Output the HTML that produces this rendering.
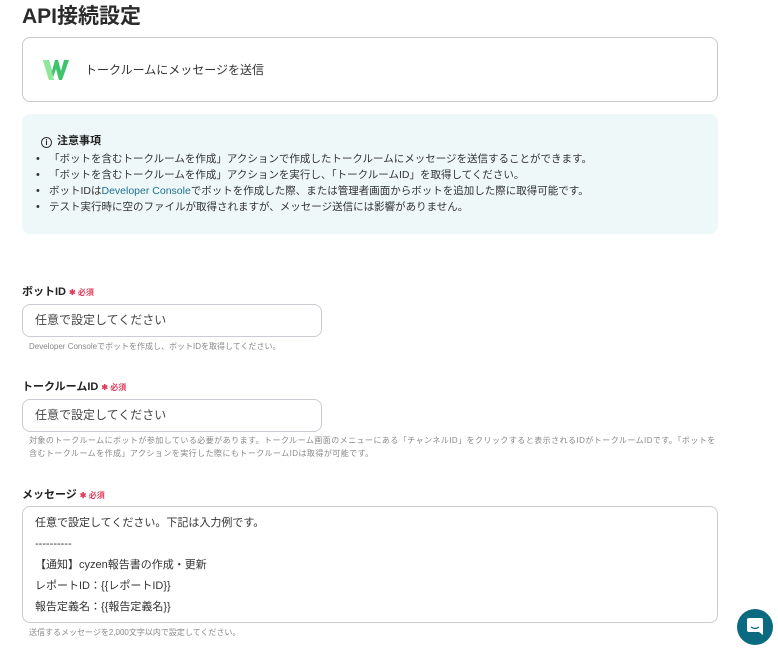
<!DOCTYPE html>
<html><head><meta charset="utf-8"><style>
*{box-sizing:border-box;margin:0;padding:0}
body{width:778px;height:654px;overflow:hidden;background:#fff;font-family:"Liberation Sans","Noto Sans CJK JP",sans-serif;color:#222;position:relative}
.abs{position:absolute}
h1{position:absolute;left:22px;top:0px;font-size:21px;font-weight:bold;color:#2b2b2b}
.card{left:22px;top:37px;width:696px;height:65px;border:1px solid #c8c8c8;border-radius:8px}
.note{left:22px;top:114px;width:696px;height:120px;background:#eff8f8;border-radius:8px}
.note ul{position:absolute;left:14px;top:37px;list-style:none;font-size:10.5px;line-height:16px;color:#333}
.note li:before{content:"•";display:inline-block;width:13px;font-size:11px}
.lbl{font-size:11px;font-weight:bold;color:#222}
.lbl .r{color:#e03b5a;font-size:8px;margin-left:3px}
.inp{border:1px solid #c9cdd3;border-radius:8px;font-size:12px;color:#444;padding-left:12px;line-height:30px}
.help{font-size:8px;color:#888;line-height:13px}
</style></head><body>
<h1>API接続設定</h1>
<div class="abs card">
 <svg class="abs" style="left:20px;top:22px" width="26" height="20" viewBox="0 0 26 20"><path d="M0 0h6l3 11 3-11h3l3 11 3-11h5l-7 20h-3L13 9 9 20H6z" fill="#3ec46d"/><path d="M0 0h6l5 20H6z" fill="#8ee89a"/></svg>
 <div class="abs" style="left:62px;top:23px;font-size:12px;color:#333">トークルームにメッセージを送信</div>
</div>
<div class="abs note">
 <div class="abs" style="left:19px;top:18px;font-size:11px;font-weight:bold;color:#222"><span style="display:inline-block;width:11px;height:11px;border:1px solid #333;border-radius:50%;font-size:8px;text-align:center;line-height:9px;vertical-align:-1px;margin-right:5px">i</span>注意事項</div>
 <ul>
  <li>「ボットを含むトークルームを作成」アクションで作成したトークルームにメッセージを送信することができます。</li>
  <li>「ボットを含むトークルームを作成」アクションを実行し、「トークルームID」を取得してください。</li>
  <li>ボットIDは<span style="color:#1f6f8b">Developer Console</span>でボットを作成した際、または管理者画面からボットを追加した際に取得可能です。</li>
  <li>テスト実行時に空のファイルが取得されますが、メッセージ送信には影響がありません。</li>
 </ul>
</div>
<div class="abs lbl" style="left:22px;top:283px">ボットID<span class="r">✱ 必須</span></div>
<div class="abs inp" style="left:22px;top:304px;width:300px;height:33px">任意で設定してください</div>
<div class="abs help" style="left:29px;top:340px">Developer Consoleでボットを作成し、ボットIDを取得してください。</div>
<div class="abs lbl" style="left:22px;top:378px">トークルームID<span class="r">✱ 必須</span></div>
<div class="abs inp" style="left:22px;top:399px;width:300px;height:33px">任意で設定してください</div>
<div class="abs help" style="left:29px;top:434px;width:740px;letter-spacing:0.45px">対象のトークルームにボットが参加している必要があります。トークルーム画面のメニューにある「チャンネルID」をクリックすると表示されるIDがトークルームIDです。「ボットを<br>含むトークルームを作成」アクションを実行した際にもトークルームIDは取得が可能です。</div>
<div class="abs lbl" style="left:22px;top:486px">メッセージ<span class="r">✱ 必須</span></div>
<div class="abs" style="left:22px;top:506px;width:696px;height:117px;border:1px solid #c9cdd3;border-radius:8px;font-size:11px;color:#333;padding:6px 12px;line-height:21px">任意で設定してください。下記は入力例です。<br>----------<br>【通知】cyzen報告書の作成・更新<br>レポートID：{{レポートID}}<br>報告定義名：{{報告定義名}}</div>
<div class="abs help" style="left:29px;top:626px">送信するメッセージを2,000文字以内で設定してください。</div>
<div class="abs" style="left:737px;top:609px;width:36px;height:36px;border-radius:50%;background:#0b6a80">
 <svg class="abs" style="left:10px;top:9px" width="16" height="18" viewBox="0 0 16 18"><path d="M2 0h12a2 2 0 0 1 2 2v15l-4-3H2a2 2 0 0 1-2-2V2a2 2 0 0 1 2-2z" fill="#fff"/><path d="M4 9q4 3 8 0" stroke="#0b6a80" stroke-width="1.4" fill="none"/></svg>
</div>
</body></html>
